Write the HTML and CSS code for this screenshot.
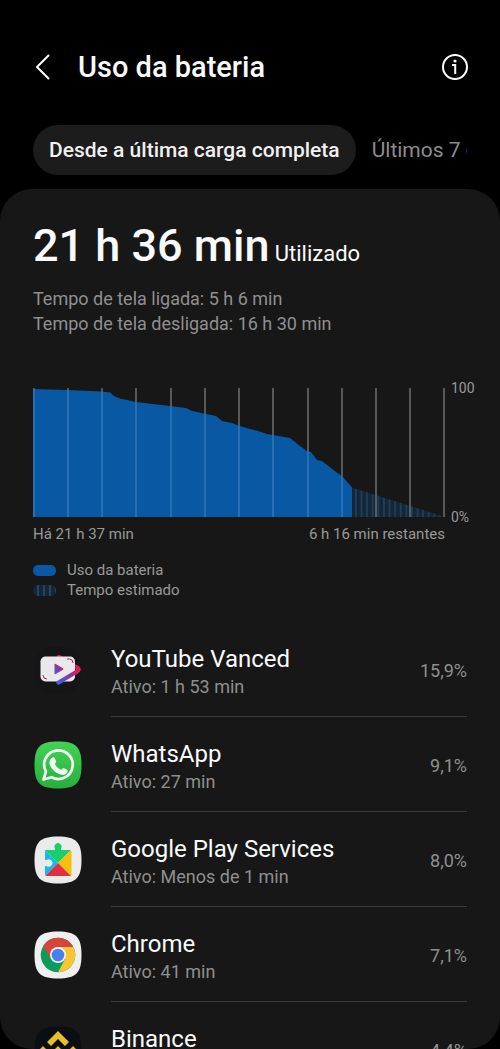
FILE: index.html
```html
<!DOCTYPE html>
<html lang="pt-BR">
<head>
  <meta charset="UTF-8">
  <meta name="viewport" content="width=device-width, initial-scale=1.0">
  <title>Uso da bateria</title>
  <link rel="stylesheet" href="styles.css">
</head>
<body>

  <header class="header">
    <button type="button" class="icon-button" aria-label="Voltar">
      <svg width="18" height="28" viewBox="0 0 18 28" fill="none" stroke="#fff" stroke-width="2" stroke-linecap="round" stroke-linejoin="round">
        <path d="M15.500 2.500L4 14l11.500 11.500"/>
      </svg>
    </button>
    <h1>Uso da bateria</h1>
    <button type="button" class="icon-button" aria-label="Informações">
      <svg width="28" height="28" viewBox="0 0 28 28" fill="none" stroke="#fff" stroke-width="2">
        <circle cx="14" cy="14" r="12"/>
        <circle cx="14" cy="8" r="1.600" fill="#fff" stroke="none"/>
        <path d="M11 12h3.200v9"/>
      </svg>
    </button>
  </header>

  <nav class="tabs">
    <button type="button" class="tab active">Desde a última carga completa</button>
    <button type="button" class="tab">Últimos 7 dias</button>
  </nav>

  <main class="card">
    <section class="summary">
      <h2>21 h 36 min <small>Utilizado</small></h2>
      <p>Tempo de tela ligada: 5 h 6 min</p>
      <p>Tempo de tela desligada: 16 h 30 min</p>
    </section>

    <section class="usage">
      <div class="chart-row">
        <svg class="chart" viewBox="0 0 412 129" preserveAspectRatio="none">
          <defs>
            <pattern id="stripes" width="5.600" height="129" patternUnits="userSpaceOnUse">
              <rect width="5.600" height="129" fill="#13273b"/>
              <rect x="3" width="1.400" height="129" fill="#28435c"/>
            </pattern>
            <clipPath id="used">
              <path d="M0 1L34 2L69 3.500L77 4.500L81 8L87 10.500L103 14L137 18L153 20L159 23L171 25.500L183 28L189 33L199 35L205 37.500L217 41L225 43L234 46L257 50L267 58L274 63L278 64L284 72L289 73L303 84L309 88L319 99.500V129H0Z"/>
            </clipPath>
          </defs>
          <path d="M319 99.500L409 128V129H319Z" fill="url(#stripes)"/>
          <path d="M1 0V129M35 0V129M69 0V129M103 0V129M138 0V129M172 0V129M206 0V129M240 0V129M275 0V129M309 0V129M343 0V129M377 0V129M411 0V129" stroke="#6f6f6f" stroke-width="1.500"/>
          <g clip-path="url(#used)">
            <rect width="412" height="129" fill="#0858a4"/>
            <path d="M1 0V129M35 0V129M69 0V129M103 0V129M138 0V129M172 0V129M206 0V129M240 0V129M275 0V129M309 0V129" stroke="#3277b8" stroke-width="1.500"/>
          </g>
        </svg>
        <div class="scale">
          <span>100</span>
          <span>0%</span>
        </div>
      </div>
      <div class="times">
        <span>Há 21 h 37 min</span>
        <span>6 h 16 min restantes</span>
      </div>
      <ul class="legend">
        <li><span class="key key-used"></span>Uso da bateria</li>
        <li><span class="key key-estimated"></span>Tempo estimado</li>
      </ul>
    </section>

    <ul class="apps">
      <li>
        <svg class="app-icon" viewBox="0 0 48 48">
          <defs>
            <linearGradient id="vanced" x1="0" y1="1" x2="1" y2="0">
              <stop offset="0" stop-color="#3b62df"/>
              <stop offset="0.450" stop-color="#80409f"/>
              <stop offset="1" stop-color="#ef1747"/>
            </linearGradient>
          </defs>
          <path d="M24 1C6 1 1 6 1 24s5 23 23 23 23-5 23-23S42 1 24 1Z" fill="#151518"/>
          <path d="M23 13V10q1-2 3-1l3 2v2Z" fill="#c51e48"/>
          <path d="M24.500 36.500L43 25.500q3-2 0-4L38 18.500" fill="none" stroke="url(#vanced)" stroke-width="4" stroke-linecap="round" stroke-linejoin="round"/>
          <rect x="6.500" y="10.500" width="34.500" height="25" rx="5" fill="#eae8eb"/>
          <path d="M33 13h2.500q3.500 0 3.500 4M9 29q0 4 4 4" fill="none" stroke="#b3264c" stroke-width="1"/>
          <path d="M20.500 18.500v9q0 1.200 1.200.6l7.300-4.400q1-.7 0-1.400l-7.300-4.400q-1.200-.6-1.200.6Z" fill="url(#vanced)"/>
          <path d="M24.500 36.500L43 25.500q3-2 1-3.500" fill="none" stroke="url(#vanced)" stroke-width="4" stroke-linecap="round" stroke-linejoin="round"/>
        </svg>
        <div class="app-row">
          <div class="app-text">
            <h3>YouTube Vanced</h3>
            <p>Ativo: 1 h 53 min</p>
          </div>
          <span class="percent">15,9%</span>
        </div>
      </li>
      <li>
        <svg class="app-icon" viewBox="0 0 48 48">
          <defs>
            <linearGradient id="whats" x1="0" y1="0" x2="0" y2="1">
              <stop offset="0" stop-color="#43d255"/>
              <stop offset="1" stop-color="#28ae3d"/>
            </linearGradient>
          </defs>
          <path d="M24 .5C6 .5.500 6 .500 24S6 47.500 24 47.500 47.500 42 47.500 24 42 .5 24 .5Z" fill="url(#whats)"/>
          <path d="M9.500 38.500l2.400-8a14.300 14.300 0 1 1 5.700 5.700Z" fill="none" stroke="#f2fff3" stroke-width="2.700" stroke-linejoin="round"/>
          <path d="M18.700 16.500c.8-.5 1.700-.2 2 .5l1.500 3.500c.2.700-1 1.800-1.500 2.300 1.700 3 3.700 4.900 6.700 6.200.6-.7 1.400-2.200 2.200-1.900l3.500 1.700c1 .5.400 2.200-.3 3.200-1.500 2-4.500 2.200-7 1.200-4.800-1.700-8.200-4.900-9.900-9.200-1.100-3-.1-6.200 2.800-7.500Z" fill="#f2fff3"/>
        </svg>
        <div class="app-row">
          <div class="app-text">
            <h3>WhatsApp</h3>
            <p>Ativo: 27 min</p>
          </div>
          <span class="percent">9,1%</span>
        </div>
      </li>
      <li>
        <svg class="app-icon" viewBox="0 0 48 48">
          <defs>
            <clipPath id="puzzle">
              <path d="M11 14h10v-1.500a3.500 3.500 0 1 1 6 0V14h9q1.500 0 1.500 1.500v23q0 1.500-1.500 1.500H12.500q-1.500 0-1.500-1.500V30h1.500a3.700 3.700 0 1 0 0-6H11Z"/>
            </clipPath>
          </defs>
          <path d="M24 .5C6 .5.500 6 .500 24S6 47.500 24 47.500 47.500 42 47.500 24 42 .5 24 .5Z" fill="#ebebeb"/>
          <g clip-path="url(#puzzle)">
            <path d="M10 13L24 27 10 41Z" fill="#13bbea"/>
            <path d="M10 5h28v8L24 27 10 13Z" fill="#16cf69"/>
            <path d="M38 13v28L24 27Z" fill="#f6bf0d"/>
            <path d="M10 41l14-14 14 14Z" fill="#df2f43"/>
          </g>
        </svg>
        <div class="app-row">
          <div class="app-text">
            <h3>Google Play Services</h3>
            <p>Ativo: Menos de 1 min</p>
          </div>
          <span class="percent">8,0%</span>
        </div>
      </li>
      <li>
        <svg class="app-icon" viewBox="0 0 48 48">
          <path d="M24 .5C6 .5.500 6 .500 24S6 47.500 24 47.500 47.500 42 47.500 24 42 .5 24 .5Z" fill="#efefef"/>
          <circle cx="24" cy="24" r="17.300" fill="#0d9a5b"/>
          <path d="M24 16h15.300A17.300 17.300 0 0 1 24 41.300L31 28Z" fill="#f7c634"/>
          <path d="M9.200 15a17.300 17.300 0 0 1 30.100 1H24l-7 12Z" fill="#d6453a"/>
          <circle cx="24" cy="24" r="8" fill="#f2f2f2"/>
          <circle cx="24" cy="24" r="6.300" fill="#4382ee"/>
        </svg>
        <div class="app-row">
          <div class="app-text">
            <h3>Chrome</h3>
            <p>Ativo: 41 min</p>
          </div>
          <span class="percent">7,1%</span>
        </div>
      </li>
      <li>
        <svg class="app-icon" viewBox="0 0 48 48">
          <path d="M24 .5C6 .5.500 6 .500 24S6 47.500 24 47.500 47.500 42 47.500 24 42 .5 24 .5Z" fill="#0b0e12"/>
          <path d="M24 5l11 11-4 4-7-7-7 7-4-4ZM9 20l4 4-4 4-4-4ZM39 20l4 4-4 4-4-4ZM24 20l4 4-4 4-4-4ZM24 43L13 32l4-4 7 7 7-7 4 4Z" fill="#e9be2b"/>
        </svg>
        <div class="app-row">
          <div class="app-text">
            <h3>Binance</h3>
            <p>Ativo: 12 min</p>
          </div>
          <span class="percent">4,4%</span>
        </div>
      </li>
    </ul>
  </main>

</body>
</html>
```
FILE: styles.css
```css
* {
  box-sizing: border-box;
  margin: 0;
  padding: 0;
}

body {
  display: flex;
  flex-direction: column;
  height: 100vh;
  overflow: hidden;
  background-color: #000;
  color: #fafafa;
  font-family: Roboto, sans-serif;
}

button {
  border: none;
  background: none;
  color: inherit;
  font: inherit;
  cursor: pointer;
}

ul {
  list-style: none;
}

.header {
  display: flex;
  align-items: center;
  padding: 47px 31px 38px 33px;
}

.header h1 {
  flex: 1;
  padding-left: 27px;
  font-size: 29px;
  line-height: 40px;
  font-weight: 500;
}

.icon-button,
.icon-button svg {
  display: block;
}

.tabs {
  display: flex;
  flex-shrink: 0;
  margin: 0 33px 14px;
  overflow: hidden;
}

.tab {
  flex-shrink: 0;
  padding: 0 16px;
  border-radius: 25px;
  color: #8c8c8c;
  font-size: 21px;
  line-height: 50px;
  white-space: nowrap;
}

.tab.active {
  background-color: #1c1c1c;
  color: #f0f0f0;
  font-weight: 500;
}

.card {
  flex: 1;
  min-height: 0;
  padding: 32px 33px 0;
  overflow: hidden;
  border-radius: 32px;
  background-color: #171717;
}

.summary h2 {
  margin-bottom: 7px;
  font-size: 45px;
  line-height: 50px;
  font-weight: 500;
}

.summary small {
  margin-left: -6px;
  font-size: 22px;
  font-weight: 400;
}

.summary p {
  color: #8f8f8f;
  font-size: 18px;
  line-height: 25px;
}

.usage {
  padding-top: 52px;
  color: #999;
}

.chart-row {
  display: flex;
  gap: 6px;
  margin-right: -10px;
}

.chart {
  flex: 1;
  min-width: 0;
  height: 129px;
}

.scale {
  display: flex;
  flex-direction: column;
  justify-content: space-between;
  width: 26px;
  margin: -9px 0;
  font-size: 14px;
  line-height: 18px;
}

.times {
  display: flex;
  justify-content: space-between;
  margin-right: 22px;
  padding-top: 6px;
  font-size: 15px;
  line-height: 22px;
}

.legend {
  padding-top: 15px;
  font-size: 15px;
  line-height: 20px;
}

.legend li {
  display: flex;
  align-items: center;
  gap: 11px;
}

.key {
  width: 23px;
  height: 11px;
  border-radius: 5px;
}

.key-used {
  background-color: #0858a4;
}

.key-estimated {
  background: repeating-linear-gradient(90deg, #13273b 0 4px, #28435c 4px 6px);
}

.apps {
  padding-top: 22px;
}

.apps li {
  display: flex;
  align-items: center;
  gap: 28px;
}

.app-icon {
  flex-shrink: 0;
  width: 50px;
  height: 48px;
}

.app-row {
  display: flex;
  flex: 1;
  align-items: center;
  justify-content: space-between;
  height: 95px;
  border-bottom: 1px solid #3c3c3c;
}

.app-text {
  padding-top: 6px;
}

.app-row h3 {
  font-size: 24px;
  line-height: 30px;
  font-weight: 400;
}

.app-row p {
  color: #8f8f8f;
  font-size: 18px;
  line-height: 26px;
}

.percent {
  padding-top: 2px;
  color: #8f8f8f;
  font-size: 18px;
}
```
